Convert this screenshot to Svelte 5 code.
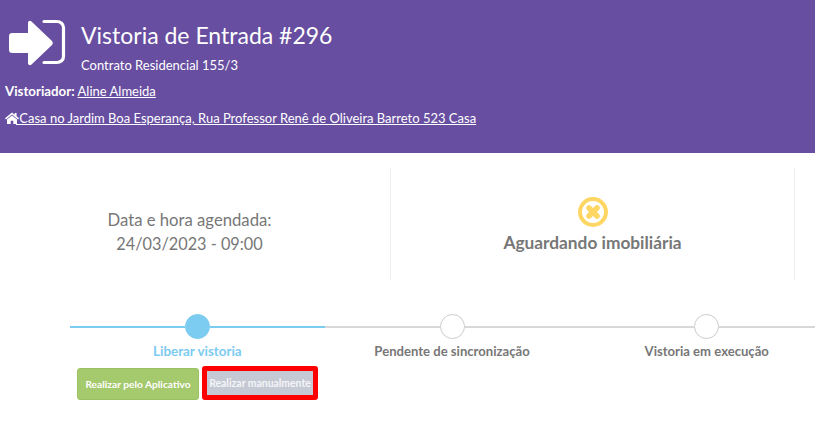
<script lang="ts">
	interface Step {
		label: string;
		done: boolean;
	}

	const steps: Step[] = [
		{ label: 'Liberar vistoria', done: true },
		{ label: 'Pendente de sincronização', done: false },
		{ label: 'Vistoria em execução', done: false }
	];
</script>

<div class="page">
	<header class="top">
		<div class="title-row">
			<svg class="enter-icon" viewBox="0 0 57 47" width="57" height="47" aria-hidden="true">
				<path d="M19 4c0-2 2-3 3.500-1.500L43 22c1 1 1 3 0 4L22.500 45.500c-1.500 1.500-3.500.5-3.500-1.500V34H3c-1.700 0-3-1.300-3-3V17c0-1.700 1.300-3 3-3h16z" fill="#fff"/>
				<path d="M35 2.500h13c3.500 0 6.500 2.500 6.500 6v29c0 3.500-3 6-6.500 6H35" fill="none" stroke="#fff" stroke-width="3.200" stroke-linecap="round"/>
			</svg>
			<div>
				<h1>Vistoria de Entrada #296</h1>
				<p class="contract">Contrato Residencial 155/3</p>
			</div>
		</div>
		<p class="line"><strong>Vistoriador:</strong> <a href="#a">Aline Almeida</a></p>
		<p class="line address">
			<a href="#b"><svg class="home" viewBox="0 0 14 12" width="14" height="12" aria-hidden="true">
					<path d="M7 0.500 0 6.300l1 1.100L7 2.500l6 4.900 1-1.100-2.400-2V1H9.600v1.700zM2 7.600V12h3.700V8.700h2.600V12H12V7.600L7 3.600z" fill="#fff"/>
				</svg> Casa no Jardim Boa Esperança, Rua Professor Renê de Oliveira Barreto 523 Casa</a>
		</p>
	</header>

	<section class="stats">
		<div class="stat when">
			<span>Data e hora agendada:</span>
			<span class="date">24/03/2023 - 09:00</span>
		</div>
		<div class="stat">
			<svg viewBox="0 0 30 30" width="30" height="30" aria-hidden="true">
				<circle cx="15" cy="15" r="13" fill="#fff" stroke="#fdd663" stroke-width="4"/>
				<path d="M11 11 19 19M19 11 11 19" stroke="#fdd663" stroke-width="5.500" stroke-linecap="round"/>
			</svg>
			<strong>Aguardando imobiliária</strong>
		</div>
		<div class="stat"></div>
	</section>

	<section class="stepper">
		{#each steps as step, i}
			<div class="step" class:done={step.done}>
				<div class="track">
					<i class="seg"></i>
					<b class="dot"></b>
					<i class="seg"></i>
				</div>
				<div class="label">{step.label}</div>
				{#if i === 0}
					<div class="actions">
						<button class="btn green">Realizar pelo Aplicativo</button>
						<button class="btn grey">Realizar manualmente</button>
					</div>
				{/if}
			</div>
		{/each}
	</section>
</div>

<style>
	:global(body) { margin: 0; background: #fff; overflow: hidden; }
	.page { width: 815px; height: 423px; overflow: hidden; font-family: Lato, sans-serif; color: #777; }
	.top { height: 153px; box-sizing: border-box; background: #674ea0; color: #fff; padding: 19px 0 0 5px; }
	.title-row { display: flex; gap: 15px; margin-left: 4px; }
	.enter-icon { flex: none; }
	h1 { margin: 1px 0 0; font-size: 23px; line-height: 30px; font-weight: 400; }
	.contract { margin: 6px 0 0; font-size: 13px; line-height: 18px; }
	.line { margin: 0; font-size: 13px; line-height: 18px; padding-top: 8px; }
	.line strong { font-size: 13.300px; }
	.address { padding-top: 9px; }
	.line a { color: #fff; text-decoration: underline; }
	.home { vertical-align: -1px; margin-right: -3px; }

	.stats { display: flex; margin: 15px 0 0 -13px; height: 112px; }
	.stat { flex: 0 0 404px; box-sizing: border-box; border-right: 1px solid #eee; display: flex; flex-direction: column; align-items: center; justify-content: center; font-size: 16.500px; line-height: 23px; }
	.stat:last-child { border: 0; }
	.stat.when { padding: 15px 0 0 2px; font-size: 16.700px; }
	.date { font-size: 16.300px; }
	.stat strong { font-size: 17.300px; font-weight: 700; margin-top: 4px; }
	.stat svg { margin-top: 2px; }

	.stepper { display: grid; grid-template-columns: repeat(3, 254.700px); margin: 34px 0 0 70px; }
	.step { display: flex; flex-direction: column; }
	.track { display: flex; align-items: center; height: 25px; }
	.seg { flex: 1; height: 2px; background: #d8d8d8; }
	.dot { width: 25px; height: 25px; box-sizing: border-box; border-radius: 50%; border: 1px solid #ccc; background: #fff; }
	.done .seg { background: #7ccbf0; }
	.done .dot { background: #7ccbf0; border-color: #7ccbf0; }
	.label { text-align: center; font-size: 13.100px; font-weight: 700; line-height: 18px; margin-top: 3px; }
	.done .label { color: #7ccbf0; font-size: 13.400px; }
	.actions { display: flex; align-items: flex-end; gap: 3px; margin: 6px 0 0 7px; width: 300px; }
	.btn { font: 700 10.200px Lato, sans-serif; color: #fff; border: 0; padding: 0; border-radius: 3px; white-space: nowrap; }
	.green { width: 122px; height: 32px; background: #a5c96d; border: 1px solid #9bc262; box-sizing: border-box; }
	.grey { width: 116px; height: 34px; box-sizing: border-box; background: #c5c9d4; border: 5px solid #f00; color: #f4f5f8; font-size: 10.400px; }
</style>
